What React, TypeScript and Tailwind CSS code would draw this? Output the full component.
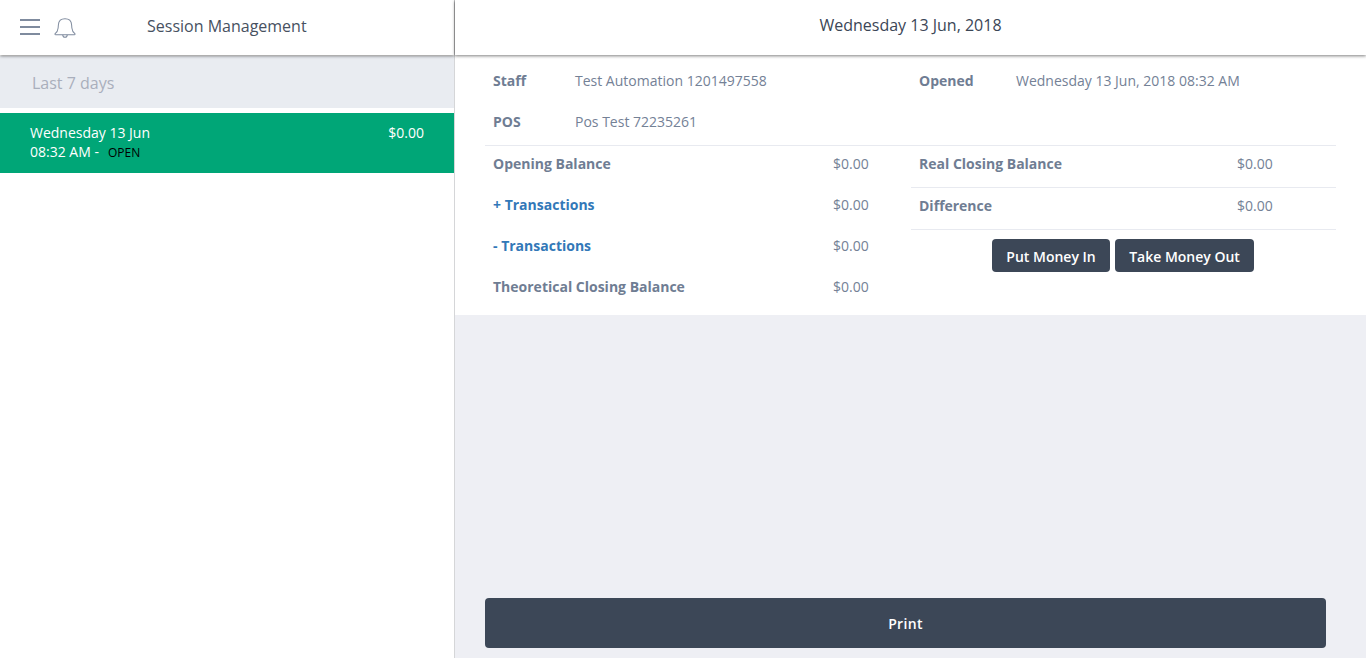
import React from "react"

const label = "text-sm leading-5 font-bold text-[#6f7d93]"
const muted = "text-sm leading-5 text-[#748196]"

function BalanceRow({ name, link }: { name: string; link?: boolean }) {
    return (
        <div className="flex h-[41px] items-center pb-[5px] pl-2">
            <div className={`w-[340px] text-sm leading-5 font-bold ${link ? "text-[#3278b8]" : "text-[#6f7d93]"}`}>
                {name}
            </div>
            <div className={muted}>$0.00</div>
        </div>
    )
}

function ClosingRow({ name }: { name: string }) {
    return (
        <div className="flex h-[42px] items-center border-b border-[#e8eaf0] pb-[5px] pl-2">
            <div className={`w-[318px] ${label}`}>{name}</div>
            <div className={muted}>$0.00</div>
        </div>
    )
}

function Bell() {
    return (
        <svg width="22" height="22" viewBox="0 0 24 24" fill="none" stroke="#7f8b9e" strokeWidth="1.1">
            <path d="M1 18.500c2.200-1.600 3.200-3.200 3.500-6.500l.3-3.500C5.100 4.600 8 2 12 2s6.900 2.600 7.200 6.500l.3 3.500c.3 3.300 1.300 4.900 3.500 6.500 0 .5-.3.8-1 .8H2c-.7 0-1-.3-1-.8z" />
            <path d="M9.500 19.500c.2 1.700 1.200 2.700 2.500 2.700s2.300-1 2.500-2.700" />
        </svg>
    )
}

export default function App() {
    return (
        <div className="flex h-[658px] w-[1366px] overflow-hidden bg-white font-['Open_Sans',sans-serif] antialiased">
            <div className="flex w-[455px] flex-col border-r border-[#d5d6d8]">
                <div className="z-10 flex h-[55px] items-center bg-white pl-5 shadow-[0_1px_3px_rgba(0,0,0,0.5)]">
                    <div className="mb-[1px] flex w-5 flex-col gap-[5px]">
                        <div className="h-0.5 bg-[#7f8b9e]" />
                        <div className="h-0.5 bg-[#7f8b9e]" />
                        <div className="h-0.5 bg-[#7f8b9e]" />
                    </div>
                    <div className="ml-[14px]">
                        <Bell />
                    </div>
                    <div className="mb-[4px] ml-[71px] text-base leading-6 text-[#47515f]">Session Management</div>
                </div>
                <div className="mt-px flex h-[52px] items-center bg-[#e9ecf1] pt-[2px] pl-8 text-base text-[#a9afbc]">
                    Last 7 days
                </div>
                <div className="mt-[5px] flex h-[60px] justify-between bg-[#00a677] pt-[10px] pr-[30px] pl-[30px] text-sm leading-5 text-white">
                    <div>
                        <div>Wednesday 13 Jun</div>
                        <div className="-mt-px flex items-center">
                            08:32 AM -<span className="mt-[2px] ml-[9px] text-xs text-black">OPEN</span>
                        </div>
                    </div>
                    <div>$0.00</div>
                </div>
            </div>
            <div className="flex flex-1 flex-col bg-[#eeeff4]">
                <div className="z-10 flex h-[55px] items-center justify-center bg-white pb-[5px] text-base text-[#3b4656] shadow-[0_1px_3px_rgba(0,0,0,0.5)]">
                    Wednesday 13 Jun, 2018
                </div>
                <div className="flex h-[260px] flex-col bg-white pr-[30px] pl-[30px]">
                    <div className="flex h-[91px] border-b border-[#e8eaf0] pt-[5px]">
                        <div className="w-[426px] pl-2">
                            <div className="flex h-[41px] items-center">
                                <div className={`w-[82px] ${label}`}>Staff</div>
                                <div className={muted}>Test Automation 1201497558</div>
                            </div>
                            <div className="flex h-[41px] items-center">
                                <div className={`w-[82px] ${label}`}>POS</div>
                                <div className={muted}>Pos Test 72235261</div>
                            </div>
                        </div>
                        <div className="pl-2">
                            <div className="flex h-[41px] items-center">
                                <div className={`w-[97px] ${label}`}>Opened</div>
                                <div className={muted}>Wednesday 13 Jun, 2018 08:32 AM</div>
                            </div>
                        </div>
                    </div>
                    <div className="flex">
                        <div className="w-[426px]">
                            <BalanceRow name="Opening Balance" />
                            <BalanceRow name="+ Transactions" link />
                            <BalanceRow name="- Transactions" link />
                            <BalanceRow name="Theoretical Closing Balance" />
                        </div>
                        <div className="flex-1">
                            <ClosingRow name="Real Closing Balance" />
                            <ClosingRow name="Difference" />
                            <div className="mt-[9px] flex justify-center gap-[5px] pr-px">
                                <button className="h-[33px] w-[118px] rounded-sm bg-[#3c4757] pt-[2px] text-sm font-semibold text-white">
                                    Put Money In
                                </button>
                                <button className="h-[33px] w-[139px] rounded-sm bg-[#3c4757] pt-[2px] text-sm font-semibold text-white">
                                    Take Money Out
                                </button>
                            </div>
                        </div>
                    </div>
                </div>
                <div className="mt-auto px-[30px] pr-[40px] pb-[10px]">
                    <button className="h-[50px] w-full rounded-sm bg-[#3c4757] pt-[2px] text-sm font-semibold tracking-wide text-white">
                        Print
                    </button>
                </div>
            </div>
        </div>
    )
}
